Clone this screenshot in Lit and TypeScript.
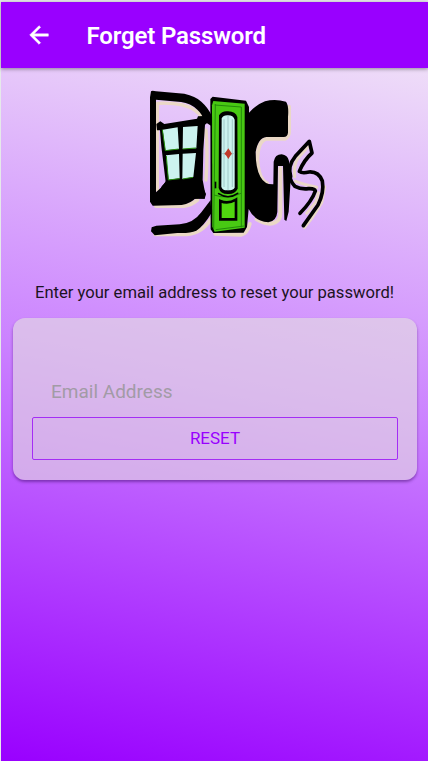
import { LitElement, html, css } from "lit";
import { customElement } from "lit/decorators.js";

@customElement("digs-logo")
class DigsLogo extends LitElement {
  static styles = css`
    :host { display: block; width: 200px; height: 165px; }
    svg { display: block; width: 100%; height: 100%; }
    .halo { fill: none; stroke: #ead8c6; stroke-linecap: round; stroke-linejoin: round; }
    .ink { fill: none; stroke: #000; stroke-linejoin: round; stroke-linecap: round; }
    .black { fill: #000; }
    .glass { fill: #ccf3ef; }
    .green { fill: #48c913; }
    .panel { fill: #50d70f; stroke: #000; stroke-width: 8; }
    .shade { fill: none; stroke: #238b0b; stroke-width: 3; }
    .red { fill: #c13a2a; }
  `;
  render() {
    return html`
      <svg viewBox="0 0 600 495" aria-label="Digs">
        <g class="halo">
          <path stroke-width="10" d="M52 330V70Q130 66 165 91Q180 102 187 112M198 150Q204 220 198 300"/>
          <path stroke-width="12" d="M48 378H132Q153 376 172 360M46 463H140Q185 459 211 420"/>
          <path stroke-width="12" d="M226 461L304 464Q322 459 329 432M350 418Q385 438 406 427Q421 420 421 398V265"/>
          <path stroke-width="12" d="M447 80V155Q447 169 435 176H380Q352 184 352 240Q356 300 381 310"/>
          <path stroke-width="9" d="M506 198L474 234Q460 255 464 290M466 304Q500 316 530 322M535 338L528 365L500 400M493 443L515 415L545 368L554 320"/>
        </g>
        <path class="black" d="M33 34Q36 31 48 34L133 41Q166 48 184 65Q205 84 214 105V138L192 124Q189 104 172 89Q152 70 123 66L48 59V337L66 320L80 300L171 297L187 318L198 342L194 356L168 353Q153 370 125 375L38 377L30 365V52Z"/>
        <path class="black" d="M49 132L61 124L73 132L171 116L174 109L193 108L205 126L195 134L190 210L188 300L196 342L194 356L48 359L65 319L77 306L64 199L60 151L51 151Z"/>
        <path class="glass" d="M68 149L113 142L117 207L76 211ZM129 141L173 138L169 205L128 207ZM78 226L117 222L119 295L86 299ZM128 221L168 219L160 291L127 297Z"/>
        <path class="shade" d="M67 149L76 212L116 207M128 207L168 204M79 228L85 300L119 296M128 297L159 292"/>
        <path class="black" d="M35 442L49 437L119 433Q160 430 184 397L212 360L214 400Q190 440 169 452Q148 461 112 459L44 466L33 454Z"/>
        <path class="black" d="M211 57L218 50L318 62L327 81V98Q345 76 375 64Q405 56 438 65Q447 77 444 111V158Q442 172 430 171H379Q354 174 347 216Q347 266 361 290Q374 314 400 313L401 245Q405 223 425 223Q443 225 447 243L452 300L446 395L439 423L433 419L429 258H414L412 396Q409 424 385 427Q343 423 326 387L321 441L311 458L220 459L212 448Z"/>
        <path class="ink" stroke-width="11" d="M449 288Q452 306 465 319Q484 329 505 326Q524 325 526 333Q516 363 480 400"/>
        <path class="ink" stroke-width="11" d="M452 290Q442 258 466 229L508 184L516 219Q492 240 478 274Q486 281 507 276Q536 274 547 303Q553 337 534 375L490 437"/>
        <path class="green" d="M220 63L314 71V443L224 455L217 440L216 76Z"/>
        <path class="shade" d="M224 75L304 81V442M226 72L221 447M222 345Q264 359 303 340M227 449L312 438"/>
        <path class="black" d="M237 106Q246 92 264 94Q287 95 292 111L293 326Q284 344 263 342Q241 342 236 324Z"/>
        <path class="glass" d="M245 115Q250 105 264 106Q280 106 284 119V323Q278 332 262 331Q246 331 244 320Z"/>
        <path fill="none" stroke="#8bb3b5" stroke-width="2" d="M264 107V331M246 221H284M252 118V321M277 118V321"/>
        <path class="red" d="M265 205L271 214L276 221L271 227L265 237L259 227L253 221L259 214Z"/>
        <path class="ink" stroke-width="5" d="M236 341Q265 360 293 340"/>
        <path class="panel" d="M241 363Q264 373 288 359V418L241 418Z"/>
        <path class="black" d="M224 305H229V325H224Z"/>
      </svg>`;
  }
}

@customElement("app-root")
class AppRoot extends LitElement {
  static styles = css`
    :host {
      display: block; box-sizing: border-box; height: 761px; padding: 2px 0 0 1px;
      background: #e6e9ea; font-family: Roboto, sans-serif; overflow: hidden;
    }
    .screen {
      height: 759px; display: flex; flex-direction: column;
      background: linear-gradient(191deg, #f5eef7 0%, #cb82ff 50%, #9900ff 100%);
    }
    header {
      height: 66px; flex: none; display: flex; align-items: center;
      background: #9900ff; color: #fff; box-shadow: 0 1px 4px rgba(0, 0, 0, .4);
    }
    .back { width: 28px; height: 28px; margin: -1px 0 0 24px; fill: #fff; stroke: #fff; stroke-width: .4; }
    h1 { margin: 1px 0 0 33.5px; font-size: 24px; line-height: 28px; font-weight: 600; letter-spacing: -.15px; }
    digs-logo { margin: 12px 0 0 139px; flex: none; }
    .hint { margin: 37.5px 0 0; text-align: center; font-size: 16.6px; line-height: 20px; color: #1c1323; }
    .card {
      margin: 15px 11px 0 12px; height: 162px; box-sizing: border-box; padding: 58px 19px 20px;
      display: flex; flex-direction: column; border-radius: 12px;
      background: rgba(228, 225, 224, .6); box-shadow: 0 2px 3px rgba(50, 0, 90, .45);
    }
    .field { padding-left: 19px; height: 41px; line-height: 31px; font-size: 19px; color: #a29ba6; }
    .reset {
      height: 43px; box-sizing: border-box; border: 1px solid #a42df5; border-radius: 2px;
      background: none; color: #9900ff; font: 400 17px Roboto, sans-serif; padding: 0 0 1px;
    }
  `;
  render() {
    return html`
      <div class="screen">
        <header>
          <svg class="back" viewBox="0 0 24 24"><path d="M20 11H7.83l5.59-5.59L12 4l-8 8 8 8 1.41-1.41L7.83 13H20z"/></svg>
          <h1>Forget Password</h1>
        </header>
        <digs-logo></digs-logo>
        <p class="hint">Enter your email address to reset your password!</p>
        <section class="card">
          <div class="field">Email Address</div>
          <button class="reset">RESET</button>
        </section>
      </div>`;
  }
}
